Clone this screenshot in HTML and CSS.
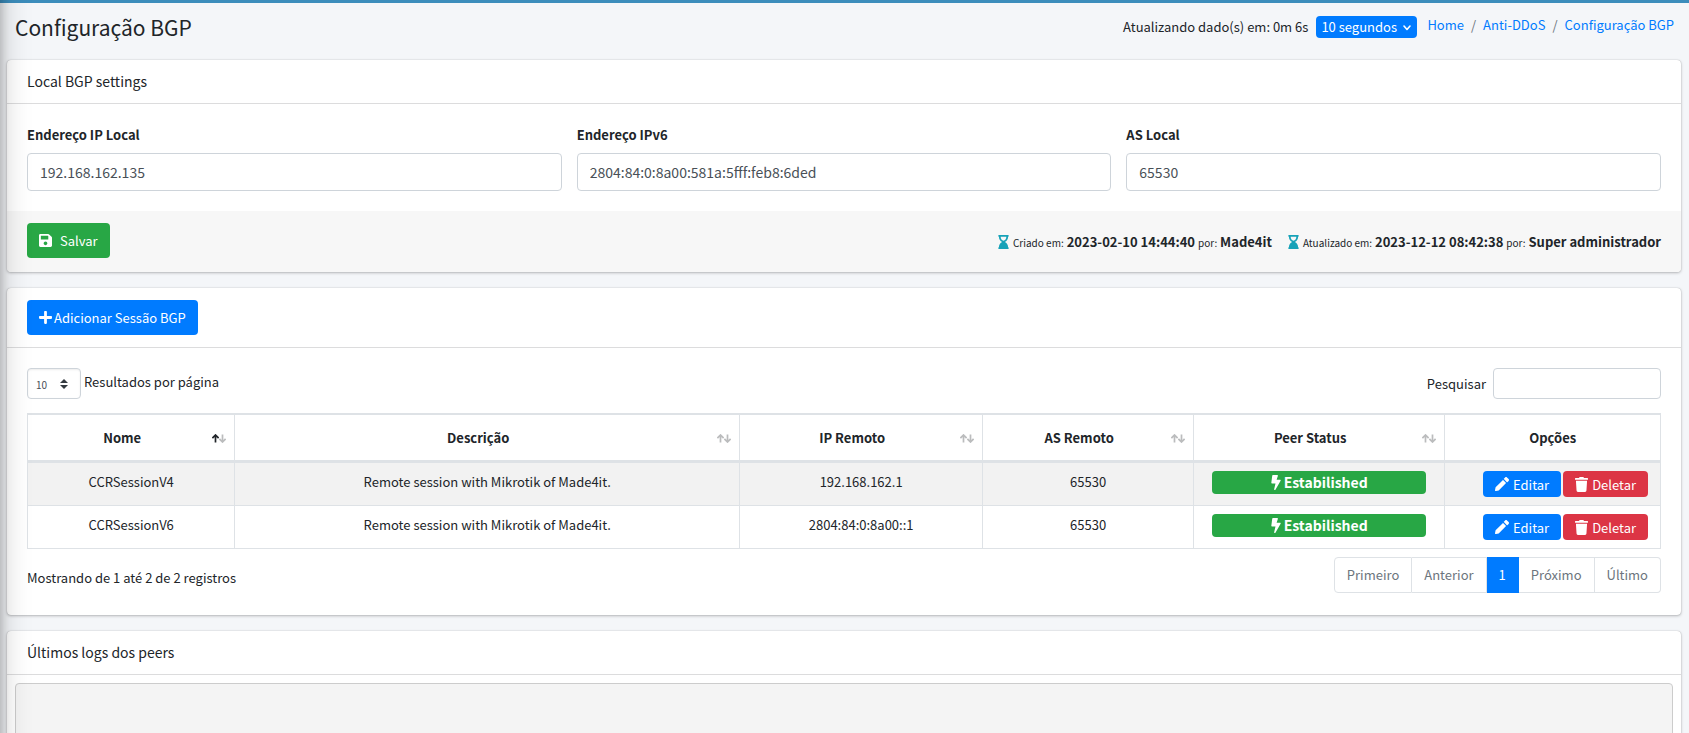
FILE: index.html
```html
<!DOCTYPE html>
<html lang="pt-BR">
<head>
<meta charset="utf-8">
<meta name="viewport" content="width=device-width, initial-scale=1">
<title>Configuração BGP</title>
<link rel="stylesheet" href="styles.css">
</head>
<body>
<svg class="sprite" aria-hidden="true">
  <symbol id="save" viewBox="0 0 448 512"><path d="M433.9 129.9l-83.9-83.9A48 48 0 0 0 316.1 32H48C21.5 32 0 53.500 0 80v352c0 26.500 21.500 48 48 48h352c26.500 0 48-21.500 48-48V163.900a48 48 0 0 0-14.100-34zM224 416c-35.300 0-64-28.700-64-64s28.700-64 64-64 64 28.700 64 64-28.700 64-64 64zm96-304.500V212c0 6.600-5.400 12-12 12H76c-6.600 0-12-5.400-12-12V108c0-6.600 5.400-12 12-12h228.500c3.200 0 6.200 1.300 8.500 3.500l3.500 3.500a12 12 0 0 1 3.500 8.500z"/></symbol>
  <symbol id="plus" viewBox="0 0 448 512"><path d="M416 208H272V64c0-17.700-14.300-32-32-32h-32c-17.700 0-32 14.300-32 32v144H32c-17.700 0-32 14.300-32 32v32c0 17.700 14.300 32 32 32h144v144c0 17.700 14.300 32 32 32h32c17.700 0 32-14.300 32-32V304h144c17.700 0 32-14.300 32-32v-32c0-17.700-14.300-32-32-32z"/></symbol>
  <symbol id="hourglass" viewBox="0 0 384 512"><path d="M360 64c13.300 0 24-10.700 24-24V24c0-13.300-10.700-24-24-24H24C10.700 0 0 10.700 0 24v16c0 13.300 10.700 24 24 24 0 91 51 167.700 120.800 192C75 280.300 24 357 24 448c-13.300 0-24 10.700-24 24v16c0 13.300 10.700 24 24 24h336c13.300 0 24-10.700 24-24v-16c0-13.300-10.700-24-24-24 0-91-51-167.700-120.800-192C309 231.700 360 155 360 64zM192 208c-57.800 0-104-66.500-104-144h208c0 77.500-46.300 144-104 144z"/></symbol>
  <symbol id="bolt" viewBox="0 0 320 512"><path d="M296 160H180.600l42.600-129.800C227.200 15 215.700 0 200 0H56C44 0 33.800 8.900 32.200 20.800l-32 240C-1.700 275.200 9.500 288 24 288h118.700L96.600 482.500c-3.600 15.200 8 29.500 23.300 29.500 8.400 0 16.400-4.400 20.800-12l176-304c9.300-15.900-2.200-36-20.700-36z"/></symbol>
  <symbol id="pencil" viewBox="0 0 512 512"><path d="M498 142l-46.600 46.600c-4.700 4.700-12.300 4.700-17 0L323.500 77.700c-4.700-4.700-4.700-12.300 0-17L370.100 14c18.700-18.700 49.100-18.700 67.900 0l60.100 60.100c18.700 18.700 18.700 49.100-.1 67.900zM283.800 117.300L21.700 379.400.3 485.900c-3 16.100 11.700 30.800 27.800 28.100l106.600-22.600 262.100-262.100c4.700-4.700 4.700-12.300 0-17L285.900 101.300z"/></symbol>
  <symbol id="trash" viewBox="0 0 448 512"><path d="M432 32H312l-9.400-18.700A24 24 0 0 0 281.100 0H166.800a24 24 0 0 0-21.400 13.300L136 32H16A16 16 0 0 0 0 48v32a16 16 0 0 0 16 16h416a16 16 0 0 0 16-16V48a16 16 0 0 0-16-16zM53.200 467a48 48 0 0 0 47.900 45h245.800a48 48 0 0 0 47.900-45L416 128H32z"/></symbol>
  <symbol id="chevron" viewBox="0 0 8 6"><path d="M1 1l3 3.500L7 1" fill="none" stroke="currentColor" stroke-width="1.600" stroke-linecap="round" stroke-linejoin="round"/></symbol>
  <symbol id="caret" viewBox="0 0 4 5"><path d="M2 0L0 2h4zm0 5L0 3h4z"/></symbol>
  <symbol id="up" viewBox="0 0 7 9"><path d="M3.500 8.500V1M.400 4.100L3.500 1l3.100 3.100" fill="none" stroke="currentColor" stroke-width="1.700"/></symbol>
  <symbol id="down" viewBox="0 0 7 9"><path d="M3.500.500V8M.400 4.900L3.500 8l3.100-3.100" fill="none" stroke="currentColor" stroke-width="1.700"/></symbol>
</svg>

<div class="sidebar-edge" aria-hidden="true"></div>

<header class="page-head">
  <h1 class="page-title">Configuração BGP</h1>
  <div class="page-tools">
    <label class="refresh-label" for="interval">Atualizando dado(s) em: 0m 6s</label>
    <span class="select-wrap">
      <select class="interval" id="interval"><option>10 segundos</option></select>
      <svg class="chevron" aria-hidden="true"><use href="#chevron"/></svg>
    </span>
    <nav aria-label="breadcrumb">
      <ol class="breadcrumb">
        <li><a href="#">Home</a></li>
        <li><a href="#">Anti-DDoS</a></li>
        <li><a href="#">Configuração BGP</a></li>
      </ol>
    </nav>
  </div>
</header>

<main class="content">
  <form class="card">
    <div class="card-header"><h2 class="card-title">Local BGP settings</h2></div>
    <div class="card-body fields">
      <div class="field">
        <label for="ipv4">Endereço IP Local</label>
        <input class="control" id="ipv4" type="text" value="192.168.162.135">
      </div>
      <div class="field">
        <label for="ipv6">Endereço IPv6</label>
        <input class="control" id="ipv6" type="text" value="2804:84:0:8a00:581a:5fff:feb8:6ded">
      </div>
      <div class="field">
        <label for="as">AS Local</label>
        <input class="control" id="as" type="text" value="65530">
      </div>
    </div>
    <div class="card-footer">
      <button class="btn btn-success" type="button"><svg class="icon icon-save" aria-hidden="true"><use href="#save"/></svg>Salvar</button>
      <div class="audit">
        <span><svg class="icon-hourglass" aria-hidden="true"><use href="#hourglass"/></svg><small>Criado em:</small> <b>2023-02-10 14:44:40</b> <small>por:</small> <b>Made4it</b></span>
        <span><svg class="icon-hourglass" aria-hidden="true"><use href="#hourglass"/></svg><small>Atualizado em:</small> <b>2023-12-12 08:42:38</b> <small>por:</small> <b>Super administrador</b></span>
      </div>
    </div>
  </form>

  <section class="card">
    <div class="card-header">
      <button class="btn btn-primary" type="button"><svg class="icon icon-plus" aria-hidden="true"><use href="#plus"/></svg>Adicionar Sessão BGP</button>
    </div>
    <div class="card-body sessions">
      <div class="table-tools">
        <div class="length">
          <span class="select-wrap">
            <select class="page-size" id="page-size"><option>10</option></select>
            <svg class="caret" aria-hidden="true"><use href="#caret"/></svg>
          </span>
          <label for="page-size">Resultados por página</label>
        </div>
        <div class="search">
          <label for="search">Pesquisar</label>
          <input class="search-box" id="search" type="search">
        </div>
      </div>
      <table class="table">
        <colgroup><col class="c-name"><col class="c-desc"><col class="c-ip"><col class="c-as"><col class="c-status"><col class="c-options"></colgroup>
        <thead>
          <tr>
            <th class="sortable asc">Nome<span class="sort"><svg><use href="#up"/></svg><svg><use href="#down"/></svg></span></th>
            <th class="sortable">Descrição<span class="sort"><svg><use href="#up"/></svg><svg><use href="#down"/></svg></span></th>
            <th class="sortable">IP Remoto<span class="sort"><svg><use href="#up"/></svg><svg><use href="#down"/></svg></span></th>
            <th class="sortable">AS Remoto<span class="sort"><svg><use href="#up"/></svg><svg><use href="#down"/></svg></span></th>
            <th class="sortable">Peer Status<span class="sort"><svg><use href="#up"/></svg><svg><use href="#down"/></svg></span></th>
            <th>Opções</th>
          </tr>
        </thead>
        <tbody>
          <tr>
            <td>CCRSessionV4</td>
            <td>Remote session with Mikrotik of Made4it.</td>
            <td>192.168.162.1</td>
            <td>65530</td>
            <td class="status"><span class="badge"><svg class="icon-bolt" aria-hidden="true"><use href="#bolt"/></svg>Estabilished</span></td>
            <td><div class="actions"><button class="btn btn-sm btn-primary" type="button"><svg class="icon" aria-hidden="true"><use href="#pencil"/></svg>Editar</button><button class="btn btn-sm btn-danger" type="button"><svg class="icon icon-trash" aria-hidden="true"><use href="#trash"/></svg>Deletar</button></div></td>
          </tr>
          <tr>
            <td>CCRSessionV6</td>
            <td>Remote session with Mikrotik of Made4it.</td>
            <td>2804:84:0:8a00::1</td>
            <td>65530</td>
            <td class="status"><span class="badge"><svg class="icon-bolt" aria-hidden="true"><use href="#bolt"/></svg>Estabilished</span></td>
            <td><div class="actions"><button class="btn btn-sm btn-primary" type="button"><svg class="icon" aria-hidden="true"><use href="#pencil"/></svg>Editar</button><button class="btn btn-sm btn-danger" type="button"><svg class="icon icon-trash" aria-hidden="true"><use href="#trash"/></svg>Deletar</button></div></td>
          </tr>
        </tbody>
      </table>
      <div class="table-foot">
        <p class="summary">Mostrando de 1 até 2 de 2 registros</p>
        <nav class="pagination" aria-label="Páginas">
          <a href="#">Primeiro</a><a href="#">Anterior</a><a class="active" href="#" aria-current="page">1</a><a href="#">Próximo</a><a href="#">Último</a>
        </nav>
      </div>
    </div>
  </section>

  <section class="card">
    <div class="card-header"><h2 class="card-title">Últimos logs dos peers</h2></div>
    <div class="log-body"><pre class="log"></pre></div>
  </section>
</main>
</body>
</html>
```
FILE: styles.css
```css
* { box-sizing: border-box; }

html { overflow-x: hidden; scrollbar-width: none; }

body {
  margin: 0;
  border-top: 3px solid #3c8dbc;
  background: #f4f6f9;
  color: #212529;
  font: 13px/21px "Source Sans Pro", "Noto Sans CJK SC", sans-serif;
}

a { color: #007bff; text-decoration: none; }
svg { fill: currentColor; flex: none; }
button, input, select { font-family: inherit; }

.sprite { position: absolute; width: 0; height: 0; }

/* Shadow cast by the collapsed sidebar */
.sidebar-edge {
  position: fixed;
  top: -57px;
  bottom: -57px;
  left: -250px;
  width: 250px;
  z-index: 10;
  pointer-events: none;
  box-shadow: 0 14px 28px rgba(0, 0, 0, .25), 0 10px 10px rgba(0, 0, 0, .22);
}

.page-head {
  display: flex;
  justify-content: space-between;
  align-items: flex-start;
  padding: 6px 15px 15px;
}
.page-title { margin: 0; font-size: 21px; line-height: 36px; font-weight: 400; }
.page-tools { display: flex; align-items: flex-start; padding-top: 7px; }
.refresh-label { padding-right: 8px; }

.select-wrap { position: relative; display: inline-flex; }
.interval {
  appearance: none;
  width: 101px;
  height: 22px;
  padding: 0 5px;
  border: 0;
  border-radius: 4px;
  background: #007bff;
  color: #fff;
  font-size: 13px;
  line-height: 22px;
}
.chevron { position: absolute; right: 6px; top: 9px; width: 8px; height: 6px; color: #fff; pointer-events: none; }

.breadcrumb { display: flex; margin: 0; padding: 0 0 0 10px; list-style: none; line-height: 18px; }
.breadcrumb li + li::before { content: "/"; padding: 0 7px; color: #6c757d; }

.content { padding: 0 8px 16px 7px; }

.card {
  margin: 0 0 16px;
  border-radius: 4px;
  background: #fff;
  box-shadow: 0 0 1px rgba(0, 0, 0, .3), 0 1px 3px rgba(0, 0, 0, .25);
}
.card-header { padding: 12px 20px; border-bottom: 1px solid #dcdcdd; }
.card-title { margin: 0; font-size: 14px; line-height: 19px; font-weight: 400; }
.card-body { padding: 20px; }

.fields { display: grid; grid-template-columns: repeat(3, 1fr); gap: 15px; }
.field label { display: block; margin-bottom: 8px; font-weight: 700; }
.control {
  display: block;
  width: 100%;
  height: 38px;
  padding: 6px 12px;
  border: 1px solid #ced4da;
  border-radius: 4px;
  background: #fff;
  color: #495057;
  font-size: 14px;
}

.card-footer {
  display: flex;
  justify-content: space-between;
  align-items: flex-start;
  padding: 12px 20px 14px;
  border-radius: 0 0 4px 4px;
  background: #f7f7f7;
}
.audit { display: flex; gap: 16px; padding-top: 8px; }
.audit small { font-size: 10px; }
.icon-hourglass { width: 11px; height: 14px; margin-right: 4px; color: #17a2b8; vertical-align: -2px; }

.btn {
  display: inline-flex;
  align-items: center;
  height: 35px;
  padding: 0 12px;
  border: 0;
  border-radius: 4px;
  color: #fff;
  font-size: 13px;
  line-height: 21px;
  vertical-align: top;
}
.btn-success { background: #28a745; }
.btn-primary { background: #007bff; }
.btn-danger { background: #dc3545; }
.btn-sm { height: 26px; }
.icon { width: 14px; height: 14px; margin-right: 4px; }
.icon-save { width: 13px; height: 15px; margin-right: 8px; }
.icon-plus { width: 13px; height: 15px; margin-right: 2px; }
.icon-trash { width: 13px; height: 15px; }

.table-tools { display: flex; justify-content: space-between; margin-bottom: 14px; }
.length { display: flex; gap: 3px; }
.length label { padding-top: 3px; }
.search { display: flex; align-items: center; gap: 7px; }
.page-size, .search-box {
  height: 31px;
  border: 1px solid #ced4da;
  border-radius: 4px;
  background: #fff;
  color: #495057;
}
.page-size { appearance: none; width: 54px; padding: 2px 8px 0; font-size: 10px; box-shadow: inset 0 1px 2px rgba(0, 0, 0, .075); }
.caret { position: absolute; right: 13px; top: 11px; width: 8px; height: 10px; color: #343a40; pointer-events: none; }
.search-box { width: 168px; padding: 4px 8px; font-size: 13px; }

.table {
  width: 100%;
  table-layout: fixed;
  border-collapse: separate;
  border-spacing: 0;
  border-right: 1px solid #dee2e6;
  text-align: center;
}
.c-name { width: 12.7%; }
.c-desc { width: 30.9%; }
.c-ip { width: 14.9%; }
.c-as { width: 12.9%; }
.c-status { width: 15.4%; }
.c-options { width: 13.2%; }
.table th, .table td { border-left: 1px solid #dee2e6; }
.table th { position: relative; padding: 12px; border-top: 2px solid #dee2e6; border-bottom: 3px solid #dee2e6; }
.table th.sortable { padding-right: 30px; }
.table td { padding: 8px 12px; border-bottom: 1px solid #dee2e6; vertical-align: top; }
.table tbody tr:nth-child(odd) { background: #f2f2f2; }
.sort { position: absolute; right: 8px; top: 19px; display: flex; }
.sort svg { width: 7px; height: 9px; opacity: .3; }
.asc .sort svg:first-child { opacity: 1; }

.table .status { padding: 8px 18px; }
.badge {
  display: flex;
  justify-content: center;
  align-items: center;
  gap: 3px;
  height: 23px;
  border-radius: 4px;
  background: #28a745;
  color: #fff;
  font-size: 14px;
  font-weight: 700;
}
.icon-bolt { width: 10px; height: 15px; }
.actions { display: flex; justify-content: flex-end; gap: 2px; }

.table-foot { display: flex; justify-content: space-between; align-items: flex-start; padding: 8px 0 2px; }
.summary { margin: 0; padding-top: 10px; }
.pagination { display: flex; line-height: 20px; }
.pagination a {
  padding: 7px 12px;
  border: 1px solid #dee2e6;
  border-left-width: 0;
  color: #6c757d;
}
.pagination a:first-child { border-left-width: 1px; border-radius: 4px 0 0 4px; }
.pagination a:last-child { border-radius: 0 4px 4px 0; }
.pagination .active { border-color: #007bff; background: #007bff; color: #fff; }

.log-body { padding: 8px; }
.log { height: 400px; margin: 0; border: 1px solid #ccc; border-radius: 4px; background: #f4f4f4; }
```
